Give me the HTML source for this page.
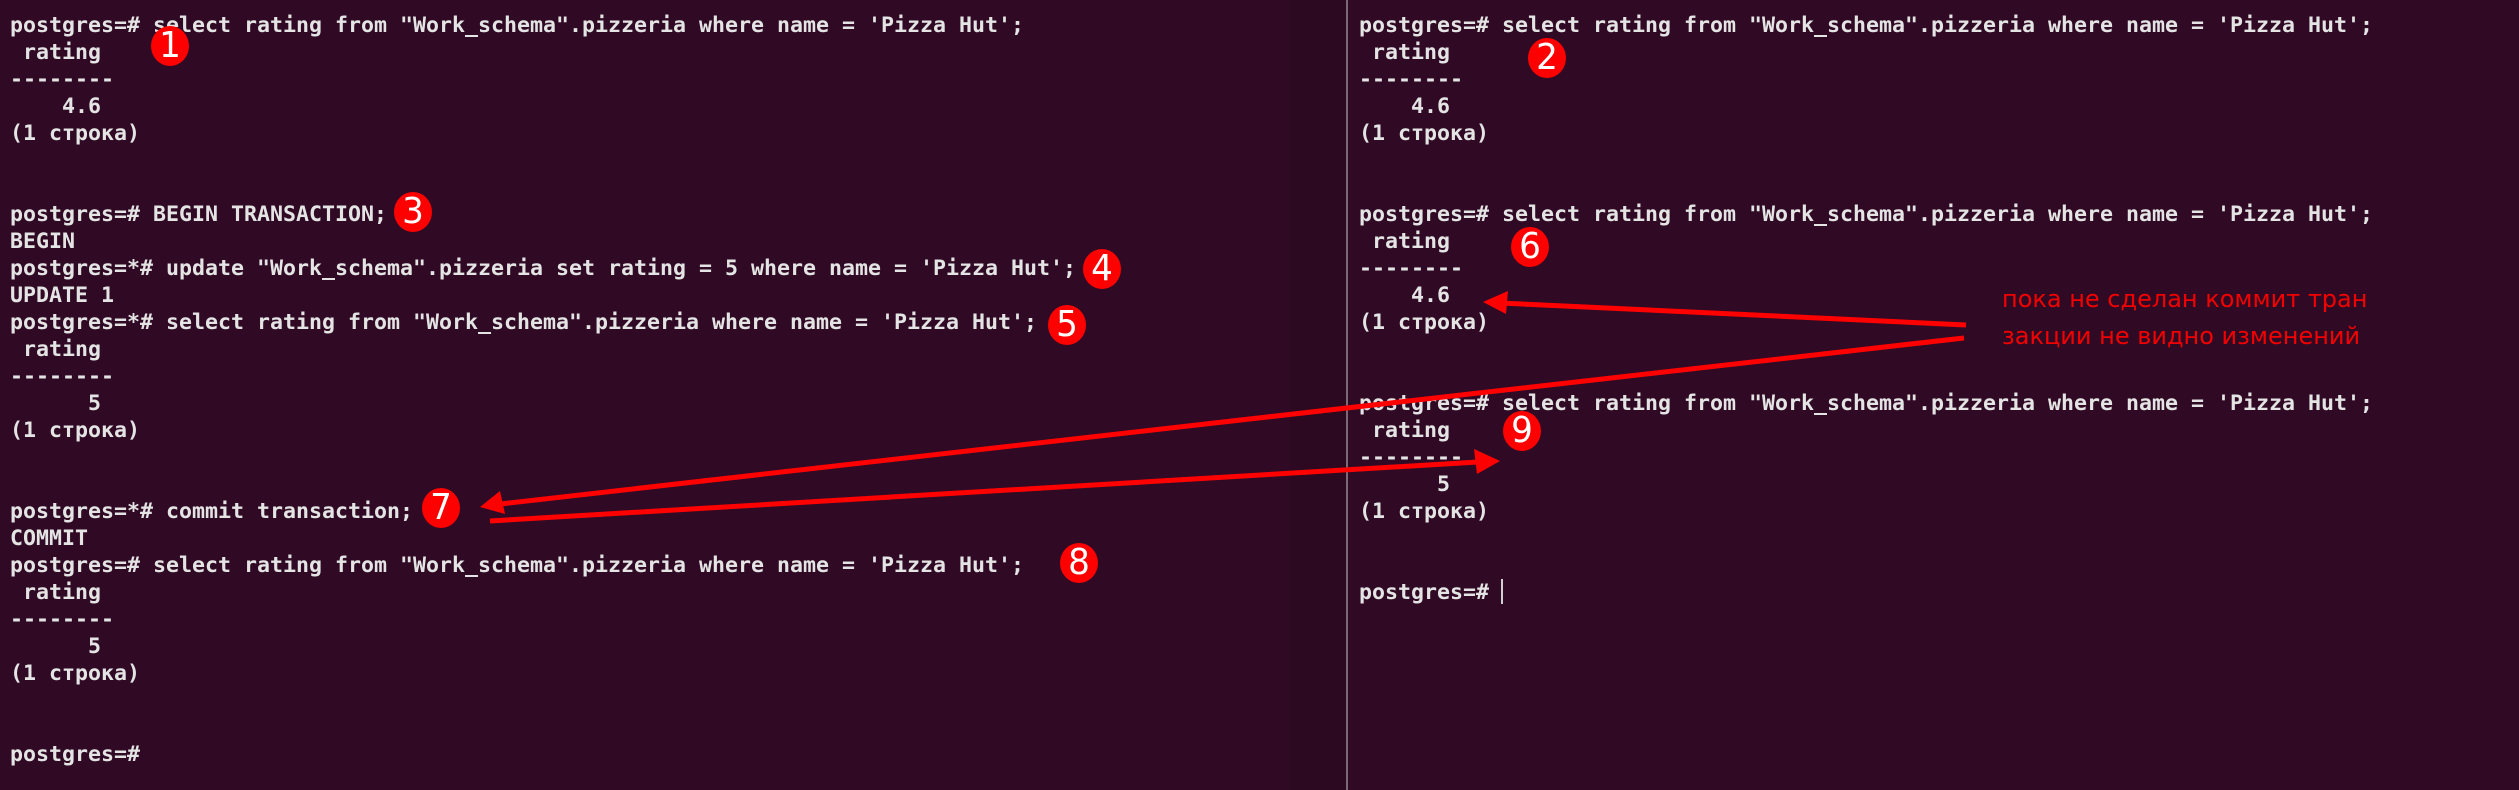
<!DOCTYPE html>
<html><head><meta charset="utf-8"><style>
html,body{margin:0;padding:0;background:#300a24;width:2519px;height:790px;overflow:hidden;position:relative}
pre{position:absolute;margin:0;font-family:"DejaVu Sans Mono","Liberation Mono",monospace;font-size:21.6px;line-height:27px;color:#e4e4e4;font-weight:bold;white-space:pre}
#l{left:10px;top:12px}
#r{left:1359px;top:12px}
#div{position:absolute;left:1346px;top:0;width:2px;height:790px;background:#7a6a74}
#shade{position:absolute;left:1290px;top:0;width:56px;height:790px;background:#2c0920}
.c{position:absolute;width:40px;height:40px;border-radius:50%;background:#f00;color:#fff;font-family:"DejaVu Sans",sans-serif;font-size:36px;line-height:40px;text-align:center;font-weight:normal;transform:scaleX(0.95)}
.note{position:absolute;left:2002px;font-family:"DejaVu Sans",sans-serif;font-size:24px;color:#f20000;white-space:nowrap;line-height:30px}
#cur{position:absolute;left:1501px;top:579px;width:2px;height:25px;background:#d0d0d0}
svg{position:absolute;left:0;top:0}
</style></head><body>
<div id="shade"></div>
<div id="div"></div>
<pre id="l">postgres=# select rating from "Work_schema".pizzeria where name = 'Pizza Hut';
 rating
--------
    4.6
(1 строка)


postgres=# BEGIN TRANSACTION;
BEGIN
postgres=*# update "Work_schema".pizzeria set rating = 5 where name = 'Pizza Hut';
UPDATE 1
postgres=*# select rating from "Work_schema".pizzeria where name = 'Pizza Hut';
 rating
--------
      5
(1 строка)


postgres=*# commit transaction;
COMMIT
postgres=# select rating from "Work_schema".pizzeria where name = 'Pizza Hut';
 rating
--------
      5
(1 строка)


postgres=#</pre>
<pre id="r">postgres=# select rating from "Work_schema".pizzeria where name = 'Pizza Hut';
 rating
--------
    4.6
(1 строка)


postgres=# select rating from "Work_schema".pizzeria where name = 'Pizza Hut';
 rating
--------
    4.6
(1 строка)


postgres=# select rating from "Work_schema".pizzeria where name = 'Pizza Hut';
 rating
--------
      5
(1 строка)


postgres=#</pre>
<div id="cur"></div>
<div class="c" style="left:150px;top:26px">1</div>
<div class="c" style="left:1527px;top:38px">2</div>
<div class="c" style="left:393px;top:192px">3</div>
<div class="c" style="left:1082px;top:249px">4</div>
<div class="c" style="left:1047px;top:305px">5</div>
<div class="c" style="left:1510px;top:227px">6</div>
<div class="c" style="left:421px;top:488px">7</div>
<div class="c" style="left:1059px;top:543px">8</div>
<div class="c" style="left:1502px;top:411px">9</div>
<div class="note" style="top:284px">пока не сделан коммит тран</div>
<div class="note" style="top:321px">закции не видно изменений</div>
<svg width="2519" height="790" viewBox="0 0 2519 790">
<g stroke="#f00" stroke-width="5" fill="none">
<line x1="1966" y1="325" x2="1500" y2="303"/>
<line x1="1964" y1="338" x2="500" y2="504"/>
<line x1="490" y1="521" x2="1478" y2="462"/>
</g>
<g fill="#f00">
<polygon points="1483,302 1508,291 1506,314"/>
<polygon points="480,507 500,491 505,514"/>
<polygon points="1500,461 1474,449 1477,474"/>
</g>
</svg>
</body></html>
